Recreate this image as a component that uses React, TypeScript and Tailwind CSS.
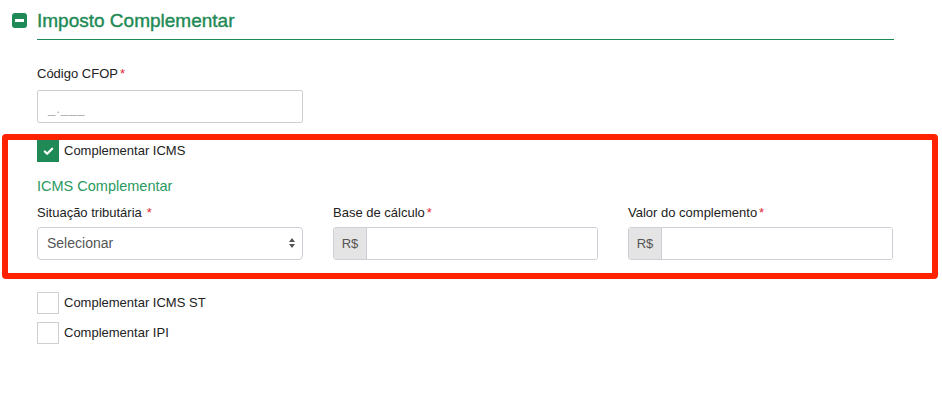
import { Check } from 'lucide-react';

const font = { fontFamily: '"Liberation Sans", Arial, sans-serif' };

function Req() {
  return <span className="ml-[2px] text-[#e3262e]">*</span>;
}

function MoneyField({ label }: { label: string }) {
  return (
    <div className="flex w-[265px] flex-col">
      <div className="flex h-[28px] items-center pt-[1px] text-[13px] text-[#222]">
        {label}
        <Req />
      </div>
      <div className="mt-[1px] flex h-[33px] overflow-hidden rounded-[3px] border border-[#ccd0d6]">
        <div className="flex w-[33px] items-center justify-center border-r border-[#ccd0d6] bg-[#e4e4e4] text-[13px] text-[#555]">
          R$
        </div>
        <div className="flex-1 bg-white" />
      </div>
    </div>
  );
}

function Box({ checked, label }: { checked?: boolean; label: string }) {
  return (
    <div className="flex h-[22px] items-center gap-[5px]">
      {checked ? (
        <div className="flex h-[22px] w-[22px] items-center justify-center bg-[#1f8a55]">
          <Check className="h-[11px] w-[11px] text-white" strokeWidth={5} />
        </div>
      ) : (
        <div className="h-[22px] w-[22px] border border-[#cfcfcf] bg-white" />
      )}
      <span className="text-[13px] text-[#222]">{label}</span>
    </div>
  );
}

export default function App() {
  return (
    <div className="h-[397px] w-[942px] bg-white" style={font}>
      <div className="flex h-[39px] items-center gap-[10px] pl-[12px] pt-[1px]">
        <div className="flex h-[15px] w-[15px] items-center justify-center rounded-[3px] bg-[#1f8a55]">
          <div className="h-[3px] w-[9px] bg-white" />
        </div>
        <span className="pt-[2px] text-[19px] text-[#1f8a55] [-webkit-text-stroke:0.4px_#1f8a55]">Imposto Complementar</span>
      </div>
      <div className="ml-[37px] h-[1px] w-[857px] bg-[#1f8a55]" />

      <div className="ml-[37px] mt-[26px] flex h-[16px] items-center text-[13px] text-[#222]">
        Código CFOP
        <Req />
      </div>
      <div className="ml-[37px] mt-[8px] flex h-[33px] w-[266px] items-center rounded-[2px] border border-[#cfcfcf] px-[10px] pt-[4px] text-[13px] tracking-[1px] text-[#aaa]">
        _.___
      </div>

      <div className="ml-[2px] mt-[11px] w-[936px] rounded-[4px] border-[6px] border-[#ff2200] pb-[13px] pl-[29px]">
        <Box checked label="Complementar ICMS" />
        <div className="mt-[14px] text-[14.5px] text-[#2a9a5e]">ICMS Complementar</div>
        <div className="flex gap-[30px]">
          <div className="flex w-[266px] flex-col">
            <div className="flex h-[28px] items-center pt-[1px] text-[13px] text-[#222]">
              Situação tributária
              <span className="ml-[5px] text-[#e3262e]">*</span>
            </div>
            <div className="mt-[1px] flex h-[33px] items-center justify-between rounded-[4px] border border-[#ccd0d6] bg-white pl-[9px] pr-[6px] text-[14px] text-[#555]">
              Selecionar
              <svg width="8" height="12" viewBox="0 0 8 12">
                <path d="M4 1 L7 5 L1 5 Z" fill="#555" />
                <path d="M4 11 L7 7 L1 7 Z" fill="#555" />
              </svg>
            </div>
          </div>
          <MoneyField label="Base de cálculo" />
          <MoneyField label="Valor do complemento" />
        </div>
      </div>

      <div className="ml-[37px] mt-[13px] flex flex-col gap-[8px]">
        <Box label="Complementar ICMS ST" />
        <Box label="Complementar IPI" />
      </div>
    </div>
  );
}
